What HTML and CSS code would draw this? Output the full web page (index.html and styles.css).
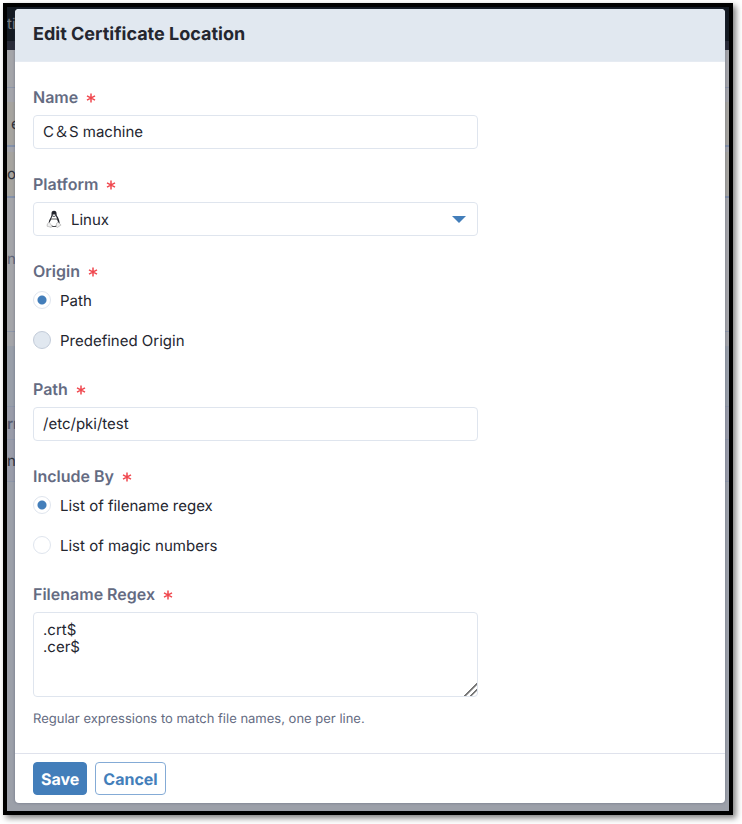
FILE: index.html
```html
<!DOCTYPE html>
<html lang="en">
<head>
    <meta charset="UTF-8">
    <meta name="viewport" content="width=device-width, initial-scale=1.0">
    <title>Edit Certificate Location</title>
    <link rel="stylesheet" href="styles.css">
</head>
<body>
    <svg width="0" height="0" class="sprite">
        <symbol id="required" viewBox="0 0 10 10">
            <path d="M5 .6V9.4M1 2.8L9 7.2M9 2.8L1 7.2" fill="none" stroke="#f0484f" stroke-width="1.5" />
        </symbol>
    </svg>
    <div class="window">
        <!-- Dimmed page under the dialog -->
        <div class="page" aria-hidden="true">
            <div class="topbar">tio</div>
            <div class="subbar"></div>
            <div class="row toolbar"></div>
            <div class="row notice indent">e</div>
            <div class="row notice second">o</div>
            <div class="row details">n</div>
            <div class="row gap"></div>
            <div class="row heading">rr</div>
            <div class="row item">n</div>
        </div>

        <form class="dialog" role="dialog" aria-labelledby="dialogTitle">
            <header class="dialog-header">
                <h1 id="dialogTitle">Edit Certificate Location</h1>
            </header>

            <div class="dialog-body">
                <div class="field">
                    <label class="label" for="name">Name <svg class="required"><use href="#required" /></svg></label>
                    <input class="input" type="text" id="name" value="C＆S machine">
                </div>

                <div class="field">
                    <label class="label" for="platform">Platform <svg class="required"><use href="#required" /></svg></label>
                    <div class="select">
                        <svg class="tux" viewBox="0 0 16 18">
                            <path d="M5 9C3.500 11 2.500 13 3 15l4 1.500h3L13 15c.5-2-.5-4-2-6z" fill="#fff" stroke="#333" stroke-width=".8" />
                            <path d="M8 .8C5.900.8 5.300 2.500 5.500 4.500c.1 2-1 3-1.900 5L2.800 12l1 .5C4.500 10 5.500 8 6.300 6.200L8 7l1.800-.9c.9 2 2.400 4.400 2.200 7.400l1.400-.4c.3-2-.6-4.200-1.600-6-.8-1.300-1.200-1.800-1.200-3.200C10.600 2 9.800.8 8 .8z" fill="#22242c" />
                            <path d="M6.200 5L8 4.200 9.800 5 8 6.400z" fill="#eee" />
                            <path d="M6 15.800q2 1 4.300-.2v1H6z" fill="#22242c" />
                            <path d="M3.200 12.200l2.900 4-.8 1.200-4.300-1.200.4-2.400zM12 12.200l1.200 1 1.900 1.800-3.600 2.400-1.300-.6.400-3.600z" fill="#eee" stroke="#aaa" stroke-width=".6" />
                        </svg>
                        <select class="input" id="platform">
                            <option selected>Linux</option>
                        </select>
                        <svg class="arrow" viewBox="0 0 14 7"><path d="M0 0H14L7 7z" fill="#437eba" /></svg>
                    </div>
                </div>

                <fieldset class="field">
                    <legend class="label">Origin <svg class="required"><use href="#required" /></svg></legend>
                    <div class="radios">
                        <label class="radio"><input type="radio" name="origin" checked> Path</label>
                        <label class="radio"><input class="muted" type="radio" name="origin"> Predefined Origin</label>
                    </div>
                </fieldset>

                <div class="field">
                    <label class="label" for="path">Path <svg class="required"><use href="#required" /></svg></label>
                    <input class="input" type="text" id="path" value="/etc/pki/test">
                </div>

                <fieldset class="field">
                    <legend class="label">Include By <svg class="required"><use href="#required" /></svg></legend>
                    <div class="radios">
                        <label class="radio"><input type="radio" name="include" checked> List of filename regex</label>
                        <label class="radio"><input type="radio" name="include"> List of magic numbers</label>
                    </div>
                </fieldset>

                <div class="field">
                    <label class="label" for="regex">Filename Regex <svg class="required"><use href="#required" /></svg></label>
                    <textarea class="input" id="regex" spellcheck="false">.crt$
.cer$</textarea>
                    <p class="help">Regular expressions to match file names, one per line.</p>
                </div>
            </div>

            <footer class="dialog-footer">
                <button class="btn btn-primary" type="submit">Save</button>
                <button class="btn" type="button">Cancel</button>
            </footer>
        </form>
    </div>
</body>
</html>
```
FILE: styles.css
```css
* {
    box-sizing: border-box;
}

body {
    margin: 0;
    padding: 3px 9px 9px 3px;
    background-color: #fff;
    color: #24262f;
    font-family: Inter, "Noto Sans CJK SC", sans-serif;
    font-size: 15px;
    text-rendering: geometricPrecision;
}

.sprite {
    position: absolute;
}

.window {
    position: relative;
    padding: 2px 4px 8px 8px;
    border: 4px solid #000;
    box-shadow: 3px 3px 6px rgba(0, 0, 0, 0.5);
}

/* Dimmed page */
.page {
    position: absolute;
    inset: 0;
    overflow: hidden;
    background-color: #9ca0a9;
}

.topbar {
    height: 34px;
    line-height: 34px;
    background-color: #141a22;
    color: #777b82;
}

.subbar {
    height: 9px;
    background-color: #292c39;
}

.row {
    display: flex;
    align-items: center;
    border-bottom: 1px solid #8e97a9;
    background-color: #a4a5a9;
    color: #30323c;
}

.toolbar {
    height: 38px;
}

.notice {
    height: 59px;
    padding-top: 14px;
    border-bottom: 2px solid #8592aa;
    background: linear-gradient(#a4a5ab 14px, #a6a49f 14px);
}

.indent {
    padding-left: 4px;
}

.second {
    height: 51px;
    padding-top: 4px;
    background: linear-gradient(#a4a5ab 5px, #a6a49f 5px);
}

.details {
    height: 134px;
    padding-bottom: 12px;
    color: #62667a;
}

.gap {
    height: 75px;
    background: linear-gradient(#a4a5a9 14px, #999fa9 14px);
}

.heading {
    height: 33px;
    background-color: #999ca9;
    color: #555a6e;
    font-weight: 600;
}

.item {
    height: 42px;
    background-color: #999ca9;
}

/* Dialog */
.dialog {
    position: relative;
    overflow: hidden;
    border-radius: 4px;
    background-color: #fff;
    box-shadow: 0 0 3px rgba(40, 50, 80, 0.4);
}

.dialog-header {
    padding: 16px 18px;
    border-bottom: 1px solid #e6ebf2;
    background-color: #e1e8f0;
}

.dialog-header h1 {
    margin: 0;
    font-size: 18px;
    font-weight: 700;
    line-height: 20px;
}

.dialog-body {
    display: flex;
    flex-direction: column;
    gap: 25px;
    padding: 25px 18px;
}

.field {
    max-width: 445px;
    margin: 0;
    padding: 0;
    border: 0;
}

.label {
    display: flex;
    align-items: center;
    gap: 8px;
    padding: 0;
    margin-bottom: 8px;
    color: #646b82;
    font-size: 16px;
    font-weight: 600;
    line-height: 20px;
}

.required {
    width: 10px;
    height: 10px;
    margin-top: 2px;
}

.input {
    display: block;
    width: 100%;
    height: 34px;
    padding: 0 9px;
    border: 1px solid #dfe5ee;
    border-radius: 4px;
    background-color: #fff;
    color: inherit;
    font: inherit;
    text-rendering: inherit;
}

input.input {
    padding-bottom: 2px;
}

.select {
    display: grid;
    align-items: center;
}

.select > * {
    grid-area: 1 / 1;
}

.select .input {
    padding-left: 37px;
    appearance: none;
}

.tux,
.arrow {
    z-index: 1;
    pointer-events: none;
}

.tux {
    width: 16px;
    height: 18px;
    margin-left: 13px;
}

.arrow {
    justify-self: end;
    width: 14px;
    height: 7px;
    margin-right: 12px;
}

fieldset .label {
    margin-bottom: 5px;
}

.radios {
    display: flex;
    flex-direction: column;
    gap: 12px;
}

.radio {
    display: flex;
    align-items: center;
    gap: 9px;
    height: 28px;
}

.radio input {
    appearance: none;
    width: 18px;
    height: 18px;
    margin: 0;
    border: 1px solid #dfe5ee;
    border-radius: 50%;
    background-color: #fff;
}

.radio input:checked {
    background: radial-gradient(circle, #437eba 4px, #fff 5px);
}

.radio .muted {
    border-color: #c3ccd9;
    background-color: #e1e8f0;
}

textarea.input {
    height: 85px;
    padding: 8px 9px;
    line-height: 17px;
    resize: vertical;
}

textarea::-webkit-resizer {
    background: linear-gradient(135deg, transparent 12px, #777 12px, #777 13px, transparent 14px, transparent 16px, #777 16px, #777 17px, transparent 18px);
}

.help {
    margin: 13px 0 0;
    color: #646b82;
    font-size: 13px;
    line-height: 18px;
}

.dialog-footer {
    display: flex;
    gap: 8px;
    padding: 8px 18px;
    border-top: 1px solid #dfe2ec;
}

.btn {
    height: 33px;
    padding: 0 7px;
    border: 1px solid #84abd6;
    border-radius: 4px;
    background-color: #fff;
    color: #437eba;
    font: inherit;
    font-size: 16px;
    font-weight: 700;
    text-rendering: inherit;
}

.btn-primary {
    border-color: #437eba;
    background-color: #437eba;
    color: #fff;
}
```
